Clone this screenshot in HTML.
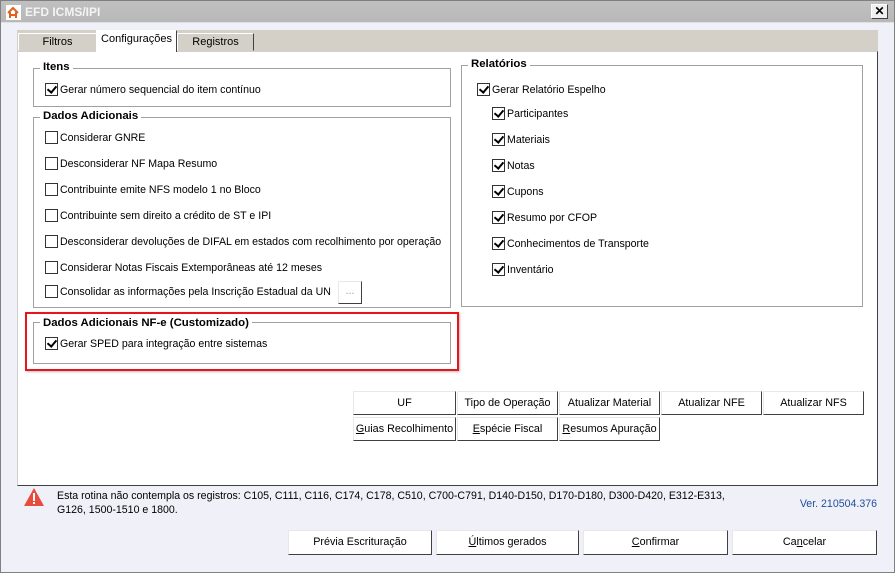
<!DOCTYPE html>
<html><head><meta charset="utf-8"><style>
*{box-sizing:border-box;margin:0;padding:0}
body{width:895px;height:573px;position:relative;background:#f0f0f8;font-family:"Liberation Sans",Tahoma,sans-serif;font-size:10.6px;color:#000;overflow:hidden;border:1px solid #808080}
.a{position:absolute}
.title{left:0;top:0;width:893px;height:22px;background:linear-gradient(#c0c0c0,#b8b8b8);border-bottom:1px solid #e0e0e0}
.title span{position:absolute;left:24px;top:4px;font-weight:bold;color:#f4f4f4;font-size:12px;font-family:"Liberation Sans",sans-serif}
.x{right:6px;top:3px;width:17px;height:15px;background:#f0f0f0;border:1px solid;border-color:#fff #404040 #404040 #fff;font-size:12px;font-weight:bold;text-align:center;line-height:12px}
.strip{left:16px;top:29px;width:861px;height:21px;background:#d4d0c8}
.tab{top:32px;height:18px;border:1px solid;border-color:#fff #404040 transparent #fff;background:#d4d0c8;text-align:center;line-height:16px;font-size:11px}
.panel{left:16px;top:50px;width:861px;height:435px;background:#fff;border:1px solid;border-color:#d0d0d0 #404040 #404040 #d0d0d0}
.grp{border:1px solid #a0a0a0}
.lg{background:#fff;font-weight:bold;font-size:11.4px;padding:0 3px}
.cb{width:13px;height:13px;border:1px solid #333;background:#fff}
.cb.c::after{content:"";position:absolute;left:3px;top:0px;width:4px;height:7px;border:solid #000;border-width:0 2px 2px 0;transform:rotate(40deg)}
.t{white-space:nowrap}
.btn{height:24px;background:#fff;border:1px solid;border-color:#e8e8e8 #404040 #404040 #e8e8e8;text-align:center;line-height:22px;font-size:10.8px;white-space:nowrap}
</style></head><body>
<div class="a title"><svg class="a" style="left:5px;top:4px" width="15" height="15"><rect width="15" height="15" fill="#fff"/><path d="M2 8l5-5 5 5M4 7v6M10 7v6M5 10h4" stroke="#e06020" stroke-width="2" fill="none"/></svg><span>EFD ICMS/IPI</span></div>
<div class="a x">✕</div>
<div class="a strip"></div>
<div class="a tab" style="left:17px;width:79px">Filtros</div>
<div class="a tab" style="left:176px;width:77px">Registros</div>
<div class="a panel"></div>
<div class="a tab" style="left:95px;top:29px;width:81px;height:22px;background:#fff;border-bottom:none;z-index:2">Configurações</div>

<div class="a grp" style="left:32px;top:67px;width:418px;height:39px"></div>
<div class="a lg" style="left:39px;top:60px">Itens</div>
<div class="a cb c" style="left:44px;top:82px"></div><div class="a t" style="left:59px;top:83px">Gerar número sequencial do item contínuo</div>

<div class="a grp" style="left:32px;top:116px;width:418px;height:191px"></div>
<div class="a lg" style="left:39px;top:109px">Dados Adicionais</div>
<div class="a cb" style="left:44px;top:130px"></div><div class="a t" style="left:59px;top:131px">Considerar GNRE</div>
<div class="a cb" style="left:44px;top:156px"></div><div class="a t" style="left:59px;top:157px">Desconsiderar NF Mapa Resumo</div>
<div class="a cb" style="left:44px;top:182px"></div><div class="a t" style="left:59px;top:183px">Contribuinte emite NFS modelo 1 no Bloco</div>
<div class="a cb" style="left:44px;top:208px"></div><div class="a t" style="left:59px;top:209px">Contribuinte sem direito a crédito de ST e IPI</div>
<div class="a cb" style="left:44px;top:234px"></div><div class="a t" style="left:59px;top:235px">Desconsiderar devoluções de DIFAL em estados com recolhimento por operação</div>
<div class="a cb" style="left:44px;top:260px"></div><div class="a t" style="left:59px;top:261px">Considerar Notas Fiscais Extemporâneas até 12 meses</div>
<div class="a cb" style="left:44px;top:284px"></div><div class="a t" style="left:59px;top:285px">Consolidar as informações pela Inscrição Estadual da UN</div>
<div class="a btn" style="left:337px;top:280px;width:24px;height:23px;color:#999;line-height:18px">...</div>

<div class="a grp" style="left:32px;top:321px;width:418px;height:42px"></div>
<div class="a lg" style="left:39px;top:316px">Dados Adicionais NF-e (Customizado)</div>
<div class="a cb c" style="left:44px;top:336px"></div><div class="a t" style="left:59px;top:337px">Gerar SPED para integração entre sistemas</div>
<div class="a" style="left:24px;top:311px;width:434px;height:59px;border:2px solid #e8141c;box-shadow:1px 1px 2px #bbb"></div>

<div class="a grp" style="left:460px;top:64px;width:402px;height:242px"></div>
<div class="a lg" style="left:467px;top:57px">Relatórios</div>
<div class="a cb c" style="left:476px;top:82px"></div><div class="a t" style="left:491px;top:83px">Gerar Relatório Espelho</div>
<div class="a cb c" style="left:491px;top:106px"></div><div class="a t" style="left:506px;top:107px">Participantes</div>
<div class="a cb c" style="left:491px;top:132px"></div><div class="a t" style="left:506px;top:133px">Materiais</div>
<div class="a cb c" style="left:491px;top:158px"></div><div class="a t" style="left:506px;top:159px">Notas</div>
<div class="a cb c" style="left:491px;top:184px"></div><div class="a t" style="left:506px;top:185px">Cupons</div>
<div class="a cb c" style="left:491px;top:210px"></div><div class="a t" style="left:506px;top:211px">Resumo por CFOP</div>
<div class="a cb c" style="left:491px;top:236px"></div><div class="a t" style="left:506px;top:237px">Conhecimentos de Transporte</div>
<div class="a cb c" style="left:491px;top:262px"></div><div class="a t" style="left:506px;top:263px">Inventário</div>

<div class="a btn" style="left:352px;top:390px;width:103px">UF</div>
<div class="a btn" style="left:456px;top:390px;width:101px">Tipo de Operação</div>
<div class="a btn" style="left:558px;top:390px;width:101px">Atualizar Material</div>
<div class="a btn" style="left:660px;top:390px;width:101px">Atualizar NFE</div>
<div class="a btn" style="left:762px;top:390px;width:101px">Atualizar NFS</div>
<div class="a btn" style="left:352px;top:416px;width:103px"><u>G</u>uias Recolhimento</div>
<div class="a btn" style="left:456px;top:416px;width:101px"><u>E</u>spécie Fiscal</div>
<div class="a btn" style="left:558px;top:416px;width:101px"><u>R</u>esumos Apuração</div>

<svg class="a" style="left:22px;top:486px" width="22" height="20"><path d="M11 1L21 19H1Z" fill="#e84c3d"/><rect x="10" y="6" width="2" height="8" fill="#fff"/><rect x="10" y="15" width="2" height="2" fill="#fff"/></svg>
<div class="a t" style="left:56px;top:488px;line-height:14px">Esta rotina não contempla os registros: C105, C111, C116, C174, C178, C510, C700-C791, D140-D150, D170-D180, D300-D420, E312-E313,<br>G126, 1500-1510 e 1800.</div>
<div class="a t" style="right:17px;top:497px;color:#1f4e9a">Ver. 210504.376</div>

<div class="a btn" style="left:287px;top:529px;width:144px;height:25px;line-height:23px">Prévia Escrituração</div>
<div class="a btn" style="left:435px;top:529px;width:143px;height:25px;line-height:23px"><u>Ú</u>ltimos gerados</div>
<div class="a btn" style="left:582px;top:529px;width:145px;height:25px;line-height:23px"><u>C</u>onfirmar</div>
<div class="a btn" style="left:731px;top:529px;width:145px;height:25px;line-height:23px">Ca<u>n</u>celar</div>
</body></html>
